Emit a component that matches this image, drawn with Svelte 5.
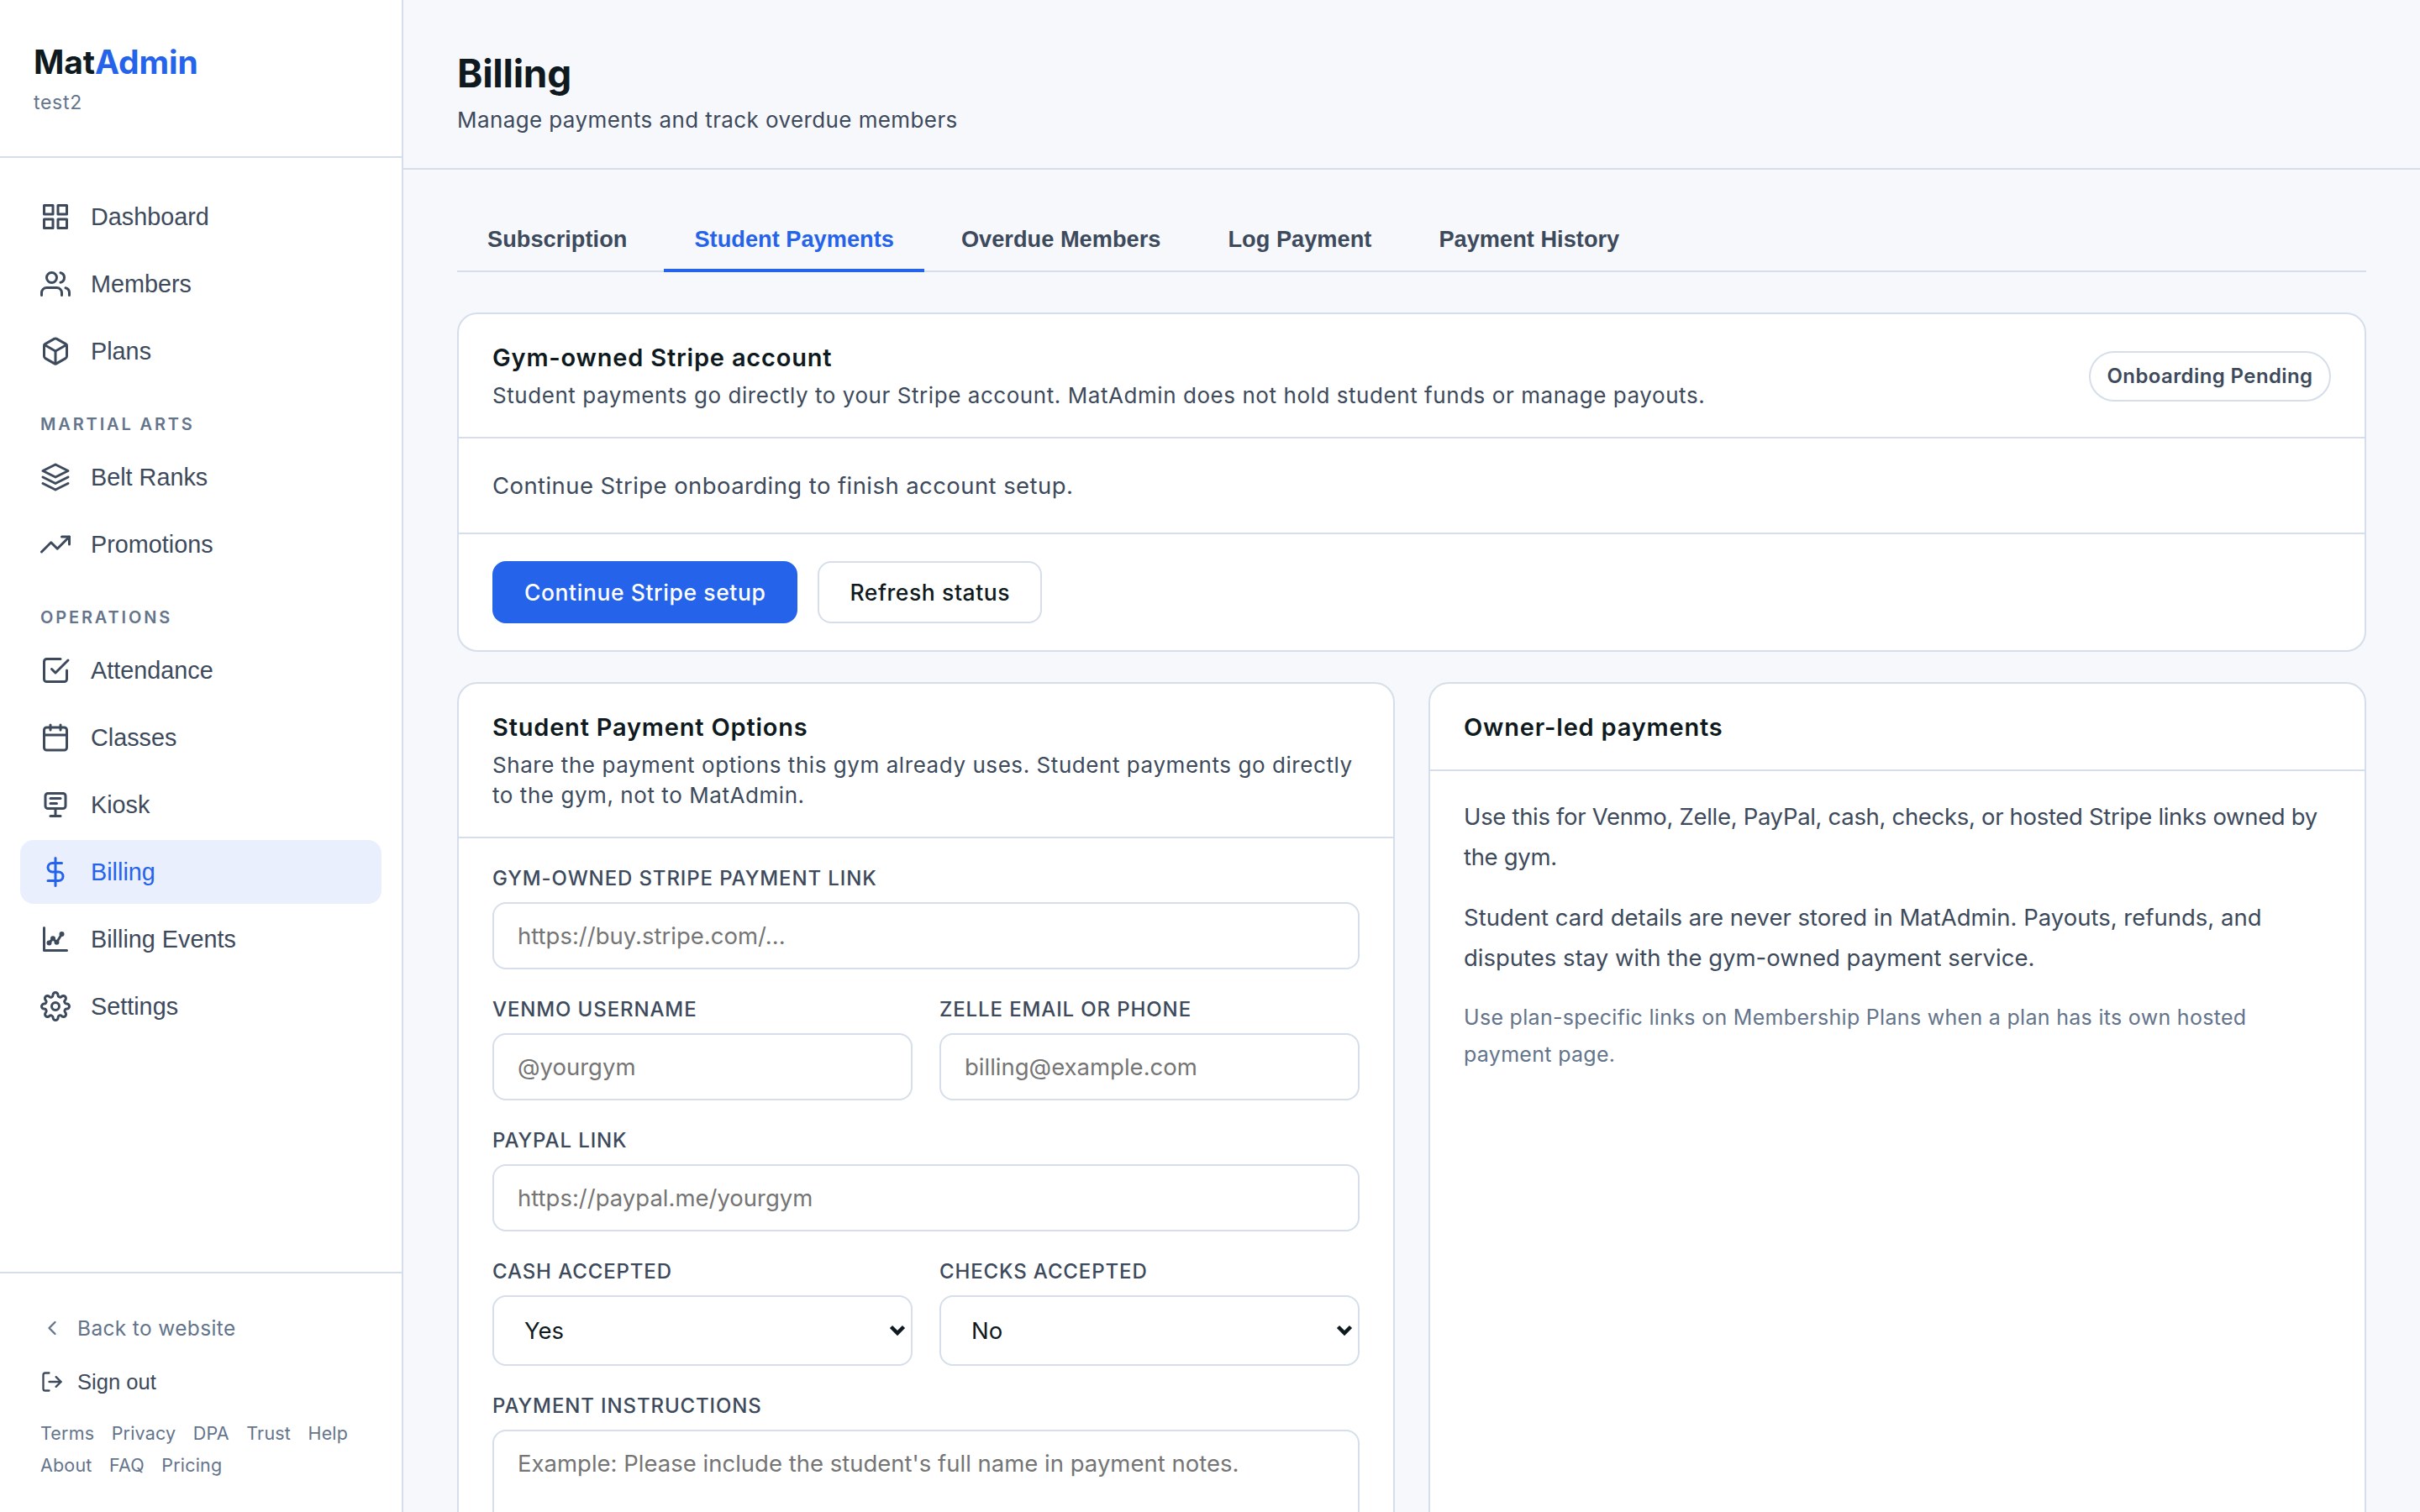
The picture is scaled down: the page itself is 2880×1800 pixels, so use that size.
<script>
    const icons = {
        grid: ["M3 3h7v7H3z", "M14 3h7v7h-7z", "M14 14h7v7h-7z", "M3 14h7v7H3z"],
        users: ["M17 21v-2a4 4 0 0 0-4-4H5a4 4 0 0 0-4 4v2", "M5 7a4 4 0 1 0 8 0a4 4 0 1 0-8 0", "M23 21v-2a4 4 0 0 0-3-3.87", "M16 3.13a4 4 0 0 1 0 7.75"],
        box: ["M21 16V8a2 2 0 0 0-1-1.73l-7-4a2 2 0 0 0-2 0l-7 4A2 2 0 0 0 3 8v8a2 2 0 0 0 1 1.73l7 4a2 2 0 0 0 2 0l7-4A2 2 0 0 0 21 16z", "M3.27 6.96L12 12.01l8.73-5.05", "M12 22.08V12"],
        layers: ["M12 2L2 7l10 5 10-5z", "M2 17l10 5 10-5", "M2 12l10 5 10-5"],
        trending: ["M23 6l-9.5 9.5-5-5L1 18", "M17 6h6v6"],
        check: ["M9 11l3 3L22 4", "M21 12v7a2 2 0 0 1-2 2H5a2 2 0 0 1-2-2V5a2 2 0 0 1 2-2h11"],
        calendar: ["M5 4h14a2 2 0 0 1 2 2v14a2 2 0 0 1-2 2H5a2 2 0 0 1-2-2V6a2 2 0 0 1 2-2z", "M16 2v4", "M8 2v4", "M3 10h18"],
        kiosk: ["M6 3h12a2 2 0 0 1 2 2v8a2 2 0 0 1-2 2H6a2 2 0 0 1-2-2V5a2 2 0 0 1 2-2z", "M8 7h8", "M8 11h5", "M12 15v6", "M8 21h8"],
        dollar: ["M12 1v22", "M17 5H9.5a3.5 3.5 0 0 0 0 7h5a3.5 3.5 0 0 1 0 7H6"],
        chart: ["M3 3v18h18", "M7 15l3-3.5 3 3 4-6.5", "M6 15a1 1 0 1 0 2 0a1 1 0 1 0-2 0", "M9 11.5a1 1 0 1 0 2 0a1 1 0 1 0-2 0", "M12 14.5a1 1 0 1 0 2 0a1 1 0 1 0-2 0", "M16 8a1 1 0 1 0 2 0a1 1 0 1 0-2 0"],
        settings: ["M9 12a3 3 0 1 0 6 0a3 3 0 1 0-6 0", "M19.4 15a1.65 1.65 0 0 0 .33 1.82l.06.06a2 2 0 0 1 0 2.83 2 2 0 0 1-2.83 0l-.06-.06a1.65 1.65 0 0 0-1.82-.33 1.65 1.65 0 0 0-1 1.51V21a2 2 0 0 1-2 2 2 2 0 0 1-2-2v-.09A1.65 1.65 0 0 0 9 19.4a1.65 1.65 0 0 0-1.82.33l-.06.06a2 2 0 0 1-2.83 0 2 2 0 0 1 0-2.83l.06-.06a1.65 1.65 0 0 0 .33-1.82 1.65 1.65 0 0 0-1.51-1H3a2 2 0 0 1-2-2 2 2 0 0 1 2-2h.09A1.65 1.65 0 0 0 4.6 9a1.65 1.65 0 0 0-.33-1.82l-.06-.06a2 2 0 0 1 0-2.83 2 2 0 0 1 2.83 0l.06.06a1.65 1.65 0 0 0 1.82.33H9a1.65 1.65 0 0 0 1-1.51V3a2 2 0 0 1 2-2 2 2 0 0 1 2 2v.09a1.65 1.65 0 0 0 1 1.51 1.65 1.65 0 0 0 1.82-.33l.06-.06a2 2 0 0 1 2.83 0 2 2 0 0 1 0 2.83l-.06.06a1.65 1.65 0 0 0-.33 1.82V9a1.65 1.65 0 0 0 1.51 1H21a2 2 0 0 1 2 2 2 2 0 0 1-2 2h-.09a1.65 1.65 0 0 0-1.51 1z"],
        back: ["M15 18l-6-6 6-6"],
        signout: ["M9 21H5a2 2 0 0 1-2-2V5a2 2 0 0 1 2-2h4", "M16 17l5-5-5-5", "M21 12H9"],
    };

    const sections = [
        {
            title: "",
            items: [
                {name: "Dashboard", icon: "grid"},
                {name: "Members", icon: "users"},
                {name: "Plans", icon: "box"},
            ],
        },
        {
            title: "Martial Arts",
            items: [
                {name: "Belt Ranks", icon: "layers"},
                {name: "Promotions", icon: "trending"},
            ],
        },
        {
            title: "Operations",
            items: [
                {name: "Attendance", icon: "check"},
                {name: "Classes", icon: "calendar"},
                {name: "Kiosk", icon: "kiosk"},
                {name: "Billing", icon: "dollar"},
                {name: "Billing Events", icon: "chart"},
                {name: "Settings", icon: "settings"},
            ],
        },
    ];

    const legalLinks = ["Terms", "Privacy", "DPA", "Trust", "Help", "About", "FAQ", "Pricing"];
    const tabs = ["Subscription", "Student Payments", "Overdue Members", "Log Payment", "Payment History"];

    let activePage = "Billing";
    let activeTab = "Student Payments";

    let stripeLink = "";
    let venmo = "";
    let zelle = "";
    let paypal = "";
    let cash = "Yes";
    let checks = "No";
    let instructions = "";
</script>

{#snippet icon(name, size)}
    <svg width={size} height={size} viewBox="0 0 24 24" fill="none" stroke="currentColor" stroke-width="2" stroke-linecap="round" stroke-linejoin="round">
        {#each icons[name] as d}
            <path {d} />
        {/each}
    </svg>
{/snippet}

<div class="app">
    <aside class="sidebar">
        <div class="brand">
            <div class="logo">Mat<span>Admin</span></div>
            <div class="gym-name">test2</div>
        </div>

        <nav class="nav">
            {#each sections as section}
                {#if section.title}
                    <div class="nav-label">{section.title}</div>
                {/if}
                {#each section.items as item}
                    <button class="nav-item" class:active={item.name === activePage} on:click={() => activePage = item.name}>
                        {@render icon(item.icon, 36)}
                        <span>{item.name}</span>
                    </button>
                {/each}
            {/each}
        </nav>

        <div class="sidebar-footer">
            <button class="footer-row back">
                {@render icon("back", 28)}
                <span>Back to website</span>
            </button>
            <button class="footer-row signout">
                {@render icon("signout", 28)}
                <span>Sign out</span>
            </button>
            <div class="legal">
                {#each legalLinks as link}
                    <span>{link}</span>
                {/each}
            </div>
        </div>
    </aside>

    <main class="main">
        <header class="page-header">
            <h1>Billing</h1>
            <p>Manage payments and track overdue members</p>
        </header>

        <div class="content">
            <div class="tabs">
                {#each tabs as tab}
                    <button class="tab" class:active={tab === activeTab} on:click={() => activeTab = tab}>{tab}</button>
                {/each}
            </div>

            <section class="card">
                <div class="card-header">
                    <div>
                        <h2>Gym-owned Stripe account</h2>
                        <p>Student payments go directly to your Stripe account. MatAdmin does not hold student funds or manage payouts.</p>
                    </div>
                    <span class="badge">Onboarding Pending</span>
                </div>
                <div class="card-body">Continue Stripe onboarding to finish account setup.</div>
                <div class="card-actions">
                    <button class="btn primary">Continue Stripe setup</button>
                    <button class="btn">Refresh status</button>
                </div>
            </section>

            <div class="columns">
                <section class="card">
                    <div class="card-header">
                        <div>
                            <h2>Student Payment Options</h2>
                            <p>Share the payment options this gym already uses. Student payments go directly to the gym, not to MatAdmin.</p>
                        </div>
                    </div>
                    <form class="form">
                        <label class="wide">
                            <span>Gym-owned Stripe payment link</span>
                            <input type="text" placeholder="https://buy.stripe.com/..." bind:value={stripeLink}>
                        </label>
                        <label>
                            <span>Venmo username</span>
                            <input type="text" placeholder="@yourgym" bind:value={venmo}>
                        </label>
                        <label>
                            <span>Zelle email or phone</span>
                            <input type="text" placeholder="billing@example.com" bind:value={zelle}>
                        </label>
                        <label class="wide">
                            <span>PayPal link</span>
                            <input type="text" placeholder="https://paypal.me/yourgym" bind:value={paypal}>
                        </label>
                        <label>
                            <span>Cash accepted</span>
                            <div class="select">
                                <select bind:value={cash}>
                                    <option>Yes</option>
                                    <option>No</option>
                                </select>
                                <svg width="20" height="14" viewBox="0 0 20 14"><path d="M2.5 2.5l7.5 7.5 7.5-7.5" /></svg>
                            </div>
                        </label>
                        <label>
                            <span>Checks accepted</span>
                            <div class="select">
                                <select bind:value={checks}>
                                    <option>Yes</option>
                                    <option>No</option>
                                </select>
                                <svg width="20" height="14" viewBox="0 0 20 14"><path d="M2.5 2.5l7.5 7.5 7.5-7.5" /></svg>
                            </div>
                        </label>
                        <label class="wide">
                            <span>Payment instructions</span>
                            <textarea placeholder="Example: Please include the student's full name in payment notes." bind:value={instructions}></textarea>
                        </label>
                    </form>
                </section>

                <section class="card">
                    <div class="card-header">
                        <h2>Owner-led payments</h2>
                    </div>
                    <div class="notes">
                        <p class="tight">Use this for Venmo, Zelle, PayPal, cash, checks, or hosted Stripe links owned by the gym.</p>
                        <p>Student card details are never stored in MatAdmin. Payouts, refunds, and disputes stay with the gym-owned payment service.</p>
                        <p class="muted">Use plan-specific links on Membership Plans when a plan has its own hosted payment page.</p>
                    </div>
                </section>
            </div>
        </div>
    </main>
</div>

<style>
    :global(body) {
        margin: 0;
        background: #f7f8fc;
    }

    .app {
        display: flex;
        height: 1800px;
        overflow: hidden;
        background: #f7f8fc;
        color: #3d4a5c;
        font-family: Inter, sans-serif;
    }

    .app * {
        box-sizing: border-box;
    }

    h1, h2, p {
        margin: 0;
    }

    button {
        border: none;
        background: none;
        padding: 0;
        text-align: left;
        color: inherit;
    }

    svg {
        flex: none;
        display: block;
    }

    .sidebar {
        width: 480px;
        flex: none;
        display: flex;
        flex-direction: column;
        background: #fff;
        border-right: 2px solid #d5deea;
    }

    .brand {
        height: 188px;
        padding: 48px 40px 0;
        border-bottom: 2px solid #d5deea;
    }

    .logo {
        font-size: 39px;
        font-weight: 700;
        line-height: 52px;
        letter-spacing: -0.1px;
        color: #0f1a20;
    }

    .logo span {
        color: #2563eb;
    }

    .gym-name {
        margin-top: 7px;
        font-size: 23px;
        line-height: 30px;
        letter-spacing: 0.7px;
        color: #64748b;
    }

    .nav {
        flex: 1;
        display: flex;
        flex-direction: column;
        gap: 4px;
        padding: 32px 24px;
    }

    .nav-label {
        padding: 32px 24px 8px;
        font-size: 20px;
        font-weight: 600;
        line-height: 26px;
        letter-spacing: 2.85px;
        text-transform: uppercase;
        color: #64748b;
    }

    .nav-item {
        display: flex;
        align-items: center;
        gap: 24px;
        height: 76px;
        padding: 0 24px;
        border-radius: 16px;
        font-family: "Liberation Sans", Arial, sans-serif;
        font-size: 28.8px;
    }

    .nav-item.active {
        background: #e9effd;
        color: #2563eb;
    }

    .sidebar-footer {
        display: flex;
        flex-direction: column;
        gap: 8px;
        padding: 37px 40px 37px 48px;
        border-top: 2px solid #d5deea;
    }

    .footer-row {
        display: flex;
        align-items: center;
        gap: 16px;
        height: 56px;
    }

    .footer-row.back {
        font-family: Inter, sans-serif;
        font-size: 24.5px;
        letter-spacing: 0.35px;
        color: #64748b;
    }

    .footer-row.signout {
        font-family: "Liberation Sans", Arial, sans-serif;
        font-size: 25.6px;
    }

    .legal {
        display: flex;
        flex-wrap: wrap;
        column-gap: 20.5px;
        margin-top: 6px;
        font-size: 21.5px;
        line-height: 38px;
        letter-spacing: 0.17px;
        color: #64748b;
    }

    .main {
        flex: 1;
        min-width: 0;
    }

    .page-header {
        height: 202px;
        padding: 59px 64px 0;
        border-bottom: 2px solid #d5deea;
    }

    .page-header h1 {
        font-size: 46px;
        font-weight: 700;
        line-height: 56px;
        letter-spacing: -0.3px;
        color: #0f1a20;
    }

    .page-header p {
        margin-top: 9px;
        font-size: 26px;
        line-height: 37px;
        letter-spacing: 0.4px;
    }

    .content {
        padding: 48px 64px;
    }

    .tabs {
        display: flex;
        gap: 8px;
        margin-bottom: 48px;
        border-bottom: 2px solid #d5deea;
    }

    .tab {
        height: 74px;
        margin-bottom: -2px;
        padding: 0 36px;
        border-bottom: 4px solid transparent;
        font-family: "Liberation Sans", Arial, sans-serif;
        font-size: 27.2px;
        font-weight: 700;
        letter-spacing: 0.02px;
    }

    .tab.active {
        border-bottom-color: #2563eb;
        color: #2563eb;
    }

    .card {
        background: #fff;
        border: 2px solid #d5deea;
        border-radius: 24px;
    }

    .card-header {
        display: flex;
        align-items: center;
        justify-content: space-between;
        padding: 33px 40px 31px;
        border-bottom: 2px solid #d5deea;
    }

    .card-header h2 {
        font-size: 29px;
        font-weight: 600;
        line-height: 38px;
        letter-spacing: 0.8px;
        color: #0f1a20;
    }

    .card-header p {
        margin-top: 8px;
        font-size: 26px;
        line-height: 36px;
        letter-spacing: 0.56px;
    }

    .badge {
        flex: none;
        width: 288px;
        height: 60px;
        border: 2px solid #d5deea;
        border-radius: 30px;
        font-size: 24px;
        font-weight: 600;
        line-height: 56px;
        letter-spacing: 0.4px;
        text-align: center;
    }

    .card-body {
        padding: 32px 40px;
        border-bottom: 2px solid #d5deea;
        font-size: 27.5px;
        line-height: 48px;
        letter-spacing: 0.42px;
    }

    .card-actions {
        display: flex;
        gap: 24px;
        padding: 32px 40px;
    }

    .btn {
        height: 74px;
        padding: 0 36px;
        border: 2px solid #d5deea;
        border-radius: 16px;
        background: #fff;
        font-family: Inter, sans-serif;
        font-size: 26.5px;
        font-weight: 500;
        letter-spacing: 0.58px;
        color: #0f1a20;
    }

    .btn.primary {
        border-color: #2563eb;
        background: #2563eb;
        color: #fff;
    }

    .columns {
        display: grid;
        grid-template-columns: 1fr 1fr;
        gap: 40px;
        margin-top: 36px;
    }

    .form {
        display: grid;
        grid-template-columns: 1fr 1fr;
        gap: 32px;
        padding: 32px 40px;
    }

    .form label {
        display: flex;
        flex-direction: column;
        gap: 13px;
    }

    .form .wide {
        grid-column: 1 / -1;
    }

    .form label > span {
        font-size: 24px;
        font-weight: 500;
        line-height: 31px;
        letter-spacing: 0.88px;
        text-transform: uppercase;
    }

    input, textarea, select {
        width: 100%;
        border: 2px solid #d5deea;
        border-radius: 16px;
        background: #fff;
        font-family: Inter, sans-serif;
        font-size: 27.5px;
        color: #0f1a20;
        outline: none;
    }

    input {
        height: 80px;
        padding: 0 28px;
    }

    textarea {
        height: 200px;
        padding: 18px 28px;
        line-height: 40px;
        resize: none;
    }

    ::placeholder {
        color: #757575;
        opacity: 1;
    }

    .select {
        display: grid;
        align-items: center;
    }

    .select select, .select svg {
        grid-area: 1 / 1;
    }

    select {
        appearance: none;
        height: 84px;
        padding: 0 36px;
    }

    .select svg {
        justify-self: end;
        margin-right: 8px;
        fill: none;
        stroke: #0f1a20;
        stroke-width: 4.5;
    }

    .notes {
        display: flex;
        flex-direction: column;
        gap: 24px;
        padding: 30px 40px;
        font-size: 27.5px;
        line-height: 48px;
    }

    .notes .tight {
        letter-spacing: -0.32px;
    }

    .notes .muted {
        margin-top: 1px;
        font-size: 25px;
        line-height: 44px;
        letter-spacing: 0.3px;
        color: #64748b;
    }
</style>
